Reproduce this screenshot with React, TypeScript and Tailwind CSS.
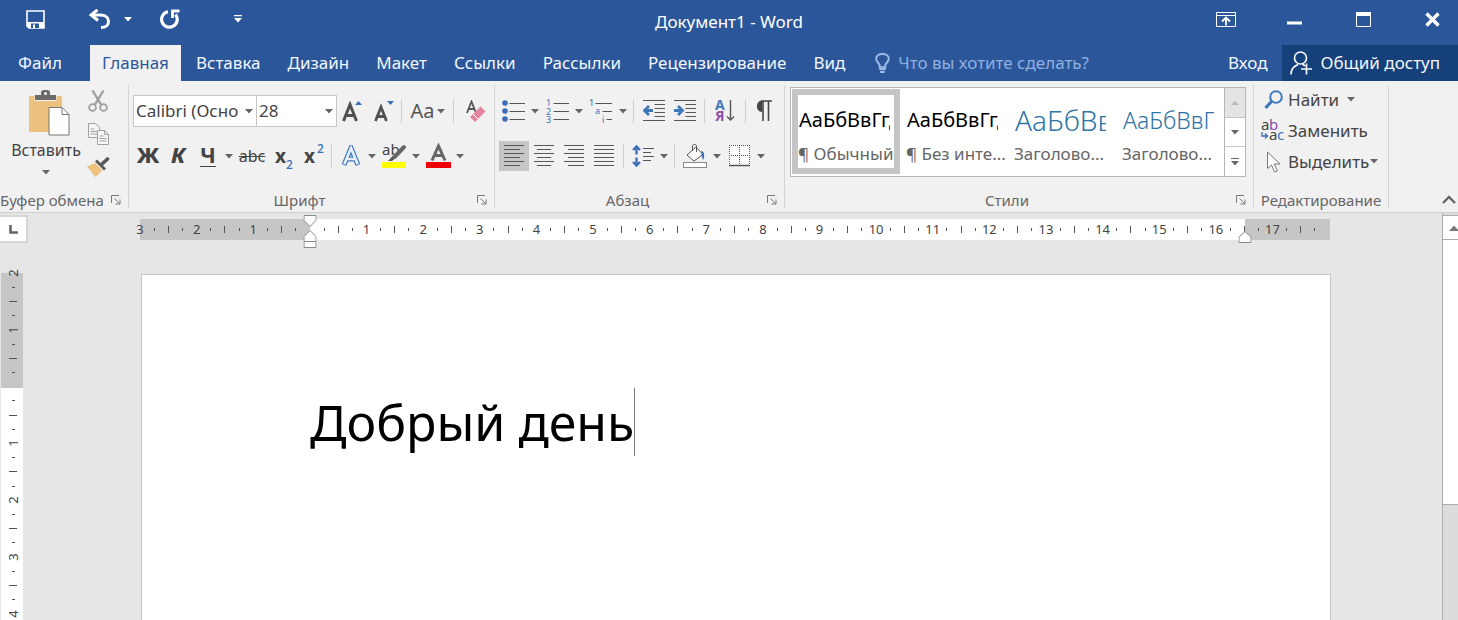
import { useState } from "react";
import type { ReactNode } from "react";
import clsx from "clsx";

const TABS = ["Вставка", "Дизайн", "Макет", "Ссылки", "Рассылки", "Рецензирование", "Вид"];

const STYLES = [
  { name: "¶ Обычный", sample: "АаБбВвГгДд", className: "text-[20px] text-black" },
  { name: "¶ Без инте...", sample: "АаБбВвГгДд", className: "text-[20px] text-black" },
  { name: "Заголово...", sample: "АаБбВвГг", className: "text-[28px] font-light text-[#2e74a5]" },
  { name: "Заголово...", sample: "АаБбВвГ", className: "text-[23px] font-light text-[#2e74a5]" },
];

// Left margin is 3 cm, text area 16.5 cm, right margin 1.5 cm; four marks per cm
const H_MARKS = Array.from({ length: 85 }, (_, i) => i - 12);
const V_MARKS = Array.from({ length: 25 }, (_, i) => i - 8);

function Caret({ className = "text-[#666]" }: { className?: string }) {
  return (
    <svg width="8" height="5" viewBox="0 0 8 5" className={clsx("shrink-0", className)} aria-hidden="true">
      <path d="M0 0h8L4 4.6z" fill="currentColor" />
    </svg>
  );
}

function IconButton({ label, className = "w-8", children }: { label: string; className?: string; children: ReactNode }) {
  return (
    <button type="button" aria-label={label} className={clsx("flex h-[30px] shrink-0 items-center justify-center", className)}>
      {children}
    </button>
  );
}

function CaretButton({ label }: { label: string }) {
  return (
    <button type="button" aria-label={label} className="flex h-[30px] w-3 shrink-0 items-center justify-center">
      <Caret />
    </button>
  );
}

function Divider() {
  return <span className="mx-1 h-6 w-px shrink-0 bg-[#cfcfcf]" />;
}

function Group({ label, launcher = true, className, children }: { label: string; launcher?: boolean; className?: string; children: ReactNode }) {
  return (
    <section aria-label={label} className={clsx("flex shrink-0 flex-col", className)}>
      <div className="my-1 flex flex-1 flex-col border-r border-[#d4d4d4]">
        <div className="flex-1">{children}</div>
        <div className="flex h-4 items-center text-[15px] leading-4 text-[#666]">
          <span className="flex-1 text-center whitespace-nowrap">{label}</span>
          {launcher && (
            <button type="button" aria-label={`${label}: параметры`} className="flex w-6 items-center justify-center">
              <svg width="10" height="10" viewBox="0 0 10 10" fill="none" stroke="#777" aria-hidden="true">
                <path d="M.5 8V.5H8M3.5 3.5l5 5M9 4.5V9H4.5" />
              </svg>
            </button>
          )}
        </div>
      </div>
    </section>
  );
}

function Lines({ rows }: { rows: [number, number][] }) {
  return (
    <svg width="20" height="22" viewBox="0 0 20 22" stroke="#555" aria-hidden="true">
      {rows.map(([x1, x2], i) => (
        <path key={i} d={`M${x1} ${i * 4 + 0.5}H${x2}`} />
      ))}
    </svg>
  );
}

function TitleBar() {
  return (
    <div className="grid h-[45px] grid-cols-[1fr_auto_1fr] items-center text-white">
      <div className="flex items-center pb-[7px] pl-[26px]">
        <button type="button" aria-label="Сохранить">
          <svg width="19" height="19" viewBox="0 0 19 19" fill="none" aria-hidden="true">
            <path d="M1 1h17v17H3l-2-2z" stroke="currentColor" strokeWidth="1.6" />
            <path d="M1 12h17v6H3l-2-2z" fill="currentColor" />
            <path d="M5 13.500h8V18H5z" fill="#2b579a" />
            <path d="M7 14.500h2V18H7z" fill="currentColor" />
          </svg>
        </button>
        <button type="button" aria-label="Отменить" className="ml-11">
          <svg width="21" height="20" viewBox="0 0 21 20" fill="none" stroke="currentColor" aria-hidden="true">
            <path d="M2 6h9.500c5 0 8 2.800 8 6.500s-3 6-7.500 6" strokeWidth="3" />
            <path d="M8.500 .8L2.200 6L9 11.500" strokeWidth="3" />
          </svg>
        </button>
        <button type="button" aria-label="Список отмены" className="ml-[14px]">
          <Caret className="text-white" />
        </button>
        <button type="button" aria-label="Повторить" className="ml-7">
          <svg width="20" height="20" viewBox="0 0 20 20" fill="none" stroke="currentColor" aria-hidden="true">
            <path d="M8 2.700A7.800 7.800 0 1 0 15.500 5.500" strokeWidth="3.200" />
            <path d="M12.500 9V2H19.500" strokeWidth="2.800" />
          </svg>
        </button>
        <button type="button" aria-label="Настройка панели" className="ml-[54px]">
          <svg width="8" height="8" viewBox="0 0 8 8" fill="currentColor" aria-hidden="true">
            <path d="M0 0h8v1.200H0zM0 3h8L4 7.500z" />
          </svg>
        </button>
      </div>
      <h1 className="pb-0.5 text-[17px] leading-6">Документ1 - Word</h1>
      <div className="flex items-center justify-end pr-[18px] pb-[7px]">
        <button type="button" aria-label="Параметры ленты">
          <svg width="20" height="15" viewBox="0 0 20 15" fill="none" stroke="currentColor" aria-hidden="true">
            <path d="M.5 .5h19v14H.5zM.5 3.500h19" />
            <path d="M10 13.500V6M6 9.500L10 5.500l4 4" strokeWidth="1.800" />
          </svg>
        </button>
        <button type="button" aria-label="Свернуть" className="ml-[51px]">
          <svg width="15" height="15" viewBox="0 0 15 15" aria-hidden="true">
            <path d="M0 9.500h15v3H0z" fill="currentColor" />
          </svg>
        </button>
        <button type="button" aria-label="Развернуть" className="ml-[54px]">
          <svg width="15" height="15" viewBox="0 0 15 15" fill="none" aria-hidden="true">
            <path d="M.5 .5h14v14H.5z" stroke="currentColor" />
            <path d="M0 0h15v4H0z" fill="currentColor" />
          </svg>
        </button>
        <button type="button" aria-label="Закрыть" className="ml-[54px]">
          <svg width="15" height="15" viewBox="0 0 15 15" stroke="currentColor" aria-hidden="true">
            <path d="M1.500 1.500l12 12M13.500 1.500l-12 12" strokeWidth="3.400" />
          </svg>
        </button>
      </div>
    </div>
  );
}

function TabBar() {
  return (
    <nav className="flex h-9 text-[17px] leading-9 whitespace-nowrap text-[#f3f6fb]">
      <button type="button" className="w-[90px] pr-2.5 text-center">Файл</button>
      <button type="button" className="w-[91px] bg-[#f1f1f2] text-center text-[#2b579a]">Главная</button>
      <div className="flex pl-px">
        {TABS.map((tab) => (
          <button key={tab} type="button" className="pr-[13px] pl-[14px]">
            {tab}
          </button>
        ))}
      </div>
      <label className="ml-[17px] flex flex-1 items-center">
        <svg width="16" height="22" viewBox="0 0 16 22" fill="none" stroke="#9db8e2" strokeWidth="2.2" aria-hidden="true">
          <path d="M5 15.500v-2C5 11.500 1.200 10 1.200 6.500C1.200 3.500 4 1.200 8 1.200s6.800 2.300 6.800 5.300C14.800 10 11 11.500 11 13.500v2z" />
          <path d="M4.500 17.500h7M5.500 20.500h5" />
        </svg>
        <input
          type="text"
          aria-label="Что вы хотите сделать?"
          placeholder="Что вы хотите сделать?"
          className="ml-2 w-full min-w-0 bg-transparent placeholder:text-[#8fb0e0] focus:outline-none"
        />
      </label>
      <button type="button" className="px-[15px]">Вход</button>
      <button type="button" className="flex items-center bg-[#15407a] pr-[18px] pl-2">
        <svg width="22" height="24" viewBox="0 0 22 24" fill="none" stroke="currentColor" strokeWidth="1.700" className="mr-2" aria-hidden="true">
          <circle cx="10.500" cy="7" r="6" />
          <path d="M1 23.500C1 17.500 4 15.500 8 13.500M12.500 13l2.500 2M16.500 12.500v11M11 18h11" />
        </svg>
        Общий доступ
      </button>
    </nav>
  );
}

function ClipboardGroup() {
  return (
    <Group label="Буфер обмена" className="w-[129px]">
      <div className="flex pt-[5px]">
        <button type="button" className="flex w-[84px] flex-col items-center pl-2 text-[16px] leading-6 text-[#444]">
          <svg width="42" height="46" viewBox="0 0 42 46" className="ml-1.5" aria-hidden="true">
            <path d="M1 6h33v36H1z" fill="#ecc27e" />
            <path d="M6.500 11V5h22v6z" fill="#f1f1f2" />
            <path d="M7 10V5h6V2.500C13 1 14 0 15.500 0h4C21 0 22 1 22 2.500V5h6v5z" fill="#6b6b6b" />
            <circle cx="17.500" cy="3.500" r="1.500" fill="#f1f1f2" />
            <path d="M21 17.500h13l7 7V45H21z" fill="#fff" stroke="#777" />
            <path d="M34 17.500v7h7" fill="none" stroke="#777" />
          </svg>
          <span className="mt-0.5">Вставить</span>
          <Caret className="mt-2 text-[#666]" />
        </button>
        <div className="flex w-7 flex-col items-center">
          <button type="button" aria-label="Вырезать">
            <svg width="20" height="22" viewBox="0 0 20 22" fill="none" stroke="#a0a0a0" strokeWidth="1.800" aria-hidden="true">
              <circle cx="4.500" cy="17.500" r="3.400" />
              <circle cx="15.500" cy="17.500" r="3.400" />
              <path d="M4.500 0.500L13 14.500M15.500 .5L7 14.500" strokeWidth="2.400" />
            </svg>
          </button>
          <button type="button" aria-label="Копировать" className="mt-[11px]">
            <svg width="21" height="22" viewBox="0 0 21 22" fill="#f6f6f6" stroke="#a0a0a0" aria-hidden="true">
              <path d="M.5 .5h7l4 4v10h-11z" />
              <path d="M2.500 6h4M2.500 8.500h7M2.500 11h7" />
              <path d="M9.500 7.500h7l4 4v10h-11z" />
              <path d="M16.500 7.500v4h4M11.500 13h4M11.500 15.500h7M11.500 18h7" fill="none" />
            </svg>
          </button>
          <button type="button" aria-label="Формат по образцу" className="mt-3">
            <svg width="23" height="20" viewBox="0 0 23 20" aria-hidden="true">
              <path d="M0 9.500L8 6l7.500 7.500L8.500 20z" fill="#ecc27e" />
              <path d="M8 4.500L10 2.500l9 9-2 2z" fill="#595959" />
              <path d="M14.500 7.500L20.500 2" stroke="#595959" strokeWidth="3.600" strokeLinecap="round" />
            </svg>
          </button>
        </div>
      </div>
    </Group>
  );
}

function FontGroup() {
  return (
    <Group label="Шрифт" className="w-[366px]">
      <div className="flex items-center pt-2.5 pl-1">
        <div className="relative">
          <select aria-label="Шрифт" className="h-8 w-[124px] appearance-none border border-[#c6c6c6] bg-white pl-0.5 text-[17px] text-[#444]">
            <option>Calibri (Осно</option>
          </select>
          <span className="pointer-events-none absolute inset-y-0 right-1 flex items-center">
            <Caret />
          </span>
        </div>
        <div className="relative -ml-px">
          <select aria-label="Размер шрифта" className="h-8 w-[81px] appearance-none border border-[#c6c6c6] bg-white pl-0.5 text-[17px] text-[#444]">
            <option>28</option>
          </select>
          <span className="pointer-events-none absolute inset-y-0 right-1 flex items-center">
            <Caret />
          </span>
        </div>
        <IconButton label="Увеличить размер" className="w-[29px]">
          <svg width="20" height="22" viewBox="0 0 20 22" aria-hidden="true">
            <path d="M1.500 21L8 4.500L14.500 21M4 15.500h8" fill="none" stroke="#505050" strokeWidth="3" />
            <path d="M13 5h7l-3.500-4z" fill="#3c6eb4" />
          </svg>
        </IconButton>
        <IconButton label="Уменьшить размер" className="w-[35px]">
          <svg width="20" height="22" viewBox="0 0 20 22" aria-hidden="true">
            <path d="M1.500 21L7 7L12.500 21M3.500 16.500h7" fill="none" stroke="#505050" strokeWidth="2.800" />
            <path d="M13 1h7l-3.500 4z" fill="#3c6eb4" />
          </svg>
        </IconButton>
        <span className="h-6 w-px bg-[#cfcfcf]" />
        <button type="button" aria-label="Регистр" className="flex w-[52px] items-center justify-center gap-0.5 text-[20px] leading-7 text-[#555]">
          Aa
          <Caret />
        </button>
        <span className="h-6 w-px bg-[#cfcfcf]" />
        <IconButton label="Очистить формат" className="ml-1 w-9">
          <svg width="20" height="22" viewBox="0 0 20 22" aria-hidden="true">
            <path d="M1 13L5.500 1.500L10 13M2.500 9h6" fill="none" stroke="#555" strokeWidth="1.800" />
            <path d="M4 17L14.500 6.500l5 5L9 22z" fill="#e5839a" />
            <path d="M7 14l5 5" stroke="#fff" />
          </svg>
        </IconButton>
      </div>
      <div className="mt-3.5 flex items-center pl-1 text-[#444]">
        <IconButton label="Полужирный" className="w-[30px] pb-[3px] text-[22px] font-extrabold">Ж</IconButton>
        <IconButton label="Курсив" className="w-[30px] pb-[3px] text-[22px] font-extrabold italic">К</IconButton>
        <IconButton label="Подчёркнутый" className="w-[30px] pb-[3px] text-[22px] font-bold underline decoration-1 underline-offset-3">Ч</IconButton>
        <CaretButton label="Тип подчёркивания" />
        <IconButton label="Зачёркнутый" className="w-[34px] text-[16px] line-through">abc</IconButton>
        <IconButton label="Подстрочный" className="w-[30px] text-[19px] font-bold">
          x<span className="self-end text-[12px] leading-3 font-medium text-[#3c6eb4]">2</span>
        </IconButton>
        <IconButton label="Надстрочный" className="w-[30px] text-[19px] font-bold">
          x<span className="ml-0.5 self-start text-[12px] leading-4 font-medium text-[#3c6eb4]">2</span>
        </IconButton>
        <span className="ml-0.5 h-6 w-px bg-[#cfcfcf]" />
        <IconButton label="Текстовые эффекты" className="ml-1 w-[30px]">
          <svg width="20" height="22" viewBox="0 0 20 22" fill="none" aria-hidden="true">
            <path d="M3 20L10 3L17 20M5.500 14h9" stroke="#3f78ba" strokeWidth="5" />
            <path d="M3.300 19.300L10 3L16.700 19.300M5.500 14h9" stroke="#e8f2fc" strokeWidth="2.600" />
          </svg>
        </IconButton>
        <CaretButton label="Выбрать эффект" />
        <IconButton label="Цвет выделения">
          <svg width="25" height="26" viewBox="0 0 25 26" className="overflow-visible" aria-hidden="true">
            <text x="0" y="12" fontSize="15" fill="#444" fontFamily="Noto Sans, sans-serif">ab</text>
            <path d="M6 18l5-5.500 2.500 2.500L10 18z" fill="#555" />
            <path d="M12.500 14L22 4" stroke="#666" strokeWidth="4" strokeLinecap="round" />
            <rect y="19" width="24" height="6" fill="#ff0" />
          </svg>
        </IconButton>
        <CaretButton label="Выбрать цвет выделения" />
        <IconButton label="Цвет текста">
          <svg width="25" height="26" viewBox="0 0 25 26" aria-hidden="true">
            <path d="M6 17.500L12.500 3L19 17.500M8.500 12.500h8" fill="none" stroke="#666" strokeWidth="3" />
            <rect y="19" width="25" height="6" fill="#ee0008" />
          </svg>
        </IconButton>
        <CaretButton label="Выбрать цвет текста" />
      </div>
    </Group>
  );
}

function ListIcon({ kind }: { kind: "bullets" | "numbers" | "levels" }) {
  return (
    <svg width="24" height="24" viewBox="0 0 24 24" fontSize="9" fill="#3c6eb4" fontFamily="Noto Sans, sans-serif" className="overflow-visible" aria-hidden="true">
      {kind === "bullets" && (
        <>
          <circle cx="3" cy="4" r="2.800" />
          <circle cx="3" cy="12" r="2.800" />
          <circle cx="3" cy="20" r="2.800" />
          <path d="M7.500 4.500H23M7.500 12.500H23M7.500 20.500H23" stroke="#555" />
        </>
      )}
      {kind === "numbers" && (
        <>
          <text x="1" y="7">1</text>
          <text x="1" y="15.500">2</text>
          <text x="1" y="24">3</text>
          <path d="M8.500 4.500H24M8.500 12.500H24M8.500 20.500H24" stroke="#555" />
        </>
      )}
      {kind === "levels" && (
        <>
          <text x="0" y="7">1</text>
          <text x="6" y="14.500">a</text>
          <text x="13" y="23.500">i</text>
          <path d="M6.500 4.500H23M13.500 12.500H23M17.500 20.500H23" stroke="#555" />
        </>
      )}
    </svg>
  );
}

function IndentIcon({ arrow }: { arrow: string }) {
  return (
    <svg width="22" height="22" viewBox="0 0 22 22" fill="none" aria-hidden="true">
      <path d="M0 .5h22M11.500 4.500H22M11.500 8.500H22M11.500 12.500H22M11.500 16.500H22M0 20.500h22" stroke="#555" />
      <path d={arrow} stroke="#3f78ba" strokeWidth="2.800" />
    </svg>
  );
}

function ParagraphGroup() {
  return (
    <Group label="Абзац" className="w-[290px]">
      <div className="flex h-[42px] items-center pt-2.5 pl-1">
        <IconButton label="Маркеры" className="w-[30px]"><ListIcon kind="bullets" /></IconButton>
        <CaretButton label="Вид маркеров" />
        <IconButton label="Нумерация"><ListIcon kind="numbers" /></IconButton>
        <CaretButton label="Вид нумерации" />
        <IconButton label="Многоуровневый список"><ListIcon kind="levels" /></IconButton>
        <CaretButton label="Вид списка" />
        <Divider />
        <IconButton label="Уменьшить отступ"><IndentIcon arrow="M10 10.500H2M6 6l-4.500 4.500L6 15" /></IconButton>
        <IconButton label="Увеличить отступ" className="w-[30px]"><IndentIcon arrow="M0 10.500h8M4 6l4.500 4.500L4 15" /></IconButton>
        <Divider />
        <IconButton label="Сортировка">
          <svg width="20" height="24" viewBox="0 0 20 24" fontSize="14" fontWeight="700" fontFamily="Noto Sans, sans-serif" className="overflow-visible" aria-hidden="true">
            <text x="0" y="11" fill="#3f78ba">А</text>
            <text x="0" y="22" fill="#8a4fa8">Я</text>
            <path d="M15.500 1v20M12 17.500l3.500 3.500 3.500-3.500" fill="none" stroke="#555" strokeWidth="1.400" />
          </svg>
        </IconButton>
        <Divider />
        <IconButton label="Знаки абзаца" className="w-7">
          <svg width="18" height="22" viewBox="0 0 18 22" aria-hidden="true">
            <path d="M7 .5a5.800 5.800 0 0 0 0 11.500z" fill="#444" />
            <path d="M6 1h11M8 1v20M13.500 1v20" stroke="#444" strokeWidth="1.600" />
          </svg>
        </IconButton>
      </div>
      <div className="mt-3.5 flex items-center pl-1">
        <IconButton label="По левому краю" className="w-[30px] bg-[#c6c6c6]"><Lines rows={[[0, 20], [0, 16], [0, 20], [0, 16], [0, 20], [0, 16]]} /></IconButton>
        <IconButton label="По центру" className="w-[30px]"><Lines rows={[[0, 20], [3, 17], [0, 20], [3, 17], [0, 20], [3, 17]]} /></IconButton>
        <IconButton label="По правому краю" className="w-[30px]"><Lines rows={[[0, 20], [4, 20], [0, 20], [4, 20], [0, 20], [4, 20]]} /></IconButton>
        <IconButton label="По ширине" className="w-[30px]"><Lines rows={[[0, 20], [0, 20], [0, 20], [0, 20], [0, 20], [0, 20]]} /></IconButton>
        <Divider />
        <IconButton label="Интервал" className="w-[30px]">
          <svg width="22" height="24" viewBox="0 0 22 24" fill="none" aria-hidden="true">
            <path d="M4.500 10.500V2M1 6l3.500-3.500L8 6M4.500 13.500V22M1 18l3.500 3.500L8 18" stroke="#3f6eb8" strokeWidth="2.400" />
            <path d="M11 4.500h11M11 8.500h8M11 12.500h11M11 16.500h8" stroke="#555" />
          </svg>
        </IconButton>
        <CaretButton label="Выбрать интервал" />
        <Divider />
        <IconButton label="Заливка">
          <svg width="24" height="24" viewBox="0 0 24 24" fill="none" aria-hidden="true">
            <path d="M4 11L13 3l7 7.500-9 6.500z" fill="#fff" stroke="#555" />
            <path d="M9.500 7V2c0-2 4-2 4 0v6" stroke="#555" />
            <path d="M18.500 6.500c3 2 3.500 6 1.500 9.500l-1.500-5z" fill="#3c6eb4" />
            <rect x=".5" y="18.500" width="23" height="5" fill="#fff" stroke="#888" />
          </svg>
        </IconButton>
        <CaretButton label="Выбрать заливку" />
        <IconButton label="Границы">
          <svg width="21" height="22" viewBox="0 0 21 22" fill="none" aria-hidden="true">
            <path d="M0 0h21v21H0z" fill="#fff" />
            <path d="M.5 0v20M20.500 0v20M10.500 0v20M0 .5h21M0 10.500h21" stroke="#555" strokeDasharray="1 1" shapeRendering="crispEdges" />
            <path d="M0 20.500h21" stroke="#555" strokeWidth="1.500" />
          </svg>
        </IconButton>
        <CaretButton label="Выбрать границы" />
      </div>
    </Group>
  );
}

function StylesGroup() {
  const [selected, setSelected] = useState(0);

  return (
    <Group label="Стили">
      <div className="mt-0.5 mr-[7px] ml-[5px] flex border border-[#b5b5b5] bg-white">
        <div className="flex h-[88px] pt-px pl-px">
          {STYLES.map((style, i) => (
            <button
              key={i}
              type="button"
              onClick={() => setSelected(i)}
              className={clsx("h-[85px] w-[108px] border-6 text-left", i === selected ? "border-[#c5c5c5]" : "border-transparent")}
            >
              <span className={clsx("mr-1 ml-px block h-11 overflow-hidden leading-[48px] whitespace-nowrap", style.className)}>{style.sample}</span>
              <span className="block text-[17px] leading-7 whitespace-nowrap text-[#666]">{style.name}</span>
            </button>
          ))}
        </div>
        <div className="flex w-[21px] flex-col border-l border-[#b5b5b5]">
          <button type="button" aria-label="Вверх" className="flex flex-1 items-center justify-center bg-[#e4e4e4]">
            <Caret className="rotate-180 text-[#bbb]" />
          </button>
          <button type="button" aria-label="Вниз" className="flex flex-1 items-center justify-center border-y border-[#c6c6c6]">
            <Caret />
          </button>
          <button type="button" aria-label="Все стили" className="flex flex-1 items-center justify-center">
            <svg width="8" height="8" viewBox="0 0 8 8" fill="#666" aria-hidden="true">
              <path d="M0 0h8v1H0zM0 3h8L4 7.500z" />
            </svg>
          </button>
        </div>
      </div>
    </Group>
  );
}

function EditingGroup() {
  return (
    <Group label="Редактирование" launcher={false} className="w-[135px]">
      <div className="-mt-px flex flex-col pl-[7px] text-[17px] text-[#444]">
        <button type="button" className="flex h-[31px] items-center">
          <span className="flex w-[27px] pl-[3px]">
            <svg width="19" height="20" viewBox="0 0 19 20" fill="none" stroke="#3f78ba" aria-hidden="true">
              <circle cx="12" cy="7" r="5.800" strokeWidth="2" />
              <path d="M7.500 11.500L1.500 18" strokeWidth="3.200" />
            </svg>
          </span>
          Найти
          <Caret className="ml-2 text-[#666]" />
        </button>
        <button type="button" className="flex h-[31px] items-center">
          <span className="flex w-[27px]">
            <svg width="24" height="24" viewBox="0 0 24 24" fontSize="15" fontFamily="Noto Sans, sans-serif" className="overflow-visible" aria-hidden="true">
              <text x="0" y="11" fill="#444">a</text>
              <text x="8" y="11" fill="#8a4fa8">b</text>
              <text x="8" y="21" fill="#444">a</text>
              <text x="16" y="21" fill="#3f78ba">c</text>
              <path d="M1 13v4h5M4 14.500L6.500 17 4 19.500" fill="none" stroke="#3c6eb4" strokeWidth="1.300" />
            </svg>
          </span>
          Заменить
        </button>
        <button type="button" className="flex h-[31px] items-center">
          <span className="flex w-[27px] pl-1.5">
            <svg width="14" height="22" viewBox="0 0 14 22" fill="#fff" stroke="#777" aria-hidden="true">
              <path d="M.5 1v16.500l4-3.500 3 7 2.800-1.200-3-6.800H13z" />
            </svg>
          </span>
          Выделить
          <Caret className="ml-px text-[#666]" />
        </button>
      </div>
    </Group>
  );
}

function HorizontalRuler() {
  return (
    <div className="relative mt-1.5 flex h-[21px] items-center justify-between bg-[linear-gradient(to_right,#c6c6c7_14.300%,#fff_14.300%,#fff_92.850%,#c6c6c7_92.850%)] text-[13px] leading-[21px] text-[#444]">
      {H_MARKS.map((mark) => (
        <span key={mark} className="flex w-0 justify-center">
          {mark === 72 || mark === 0 ? null : mark % 4 === 0 ? (
            Math.abs(mark / 4)
          ) : (
            <i className={clsx("w-px shrink-0 bg-[#555]", mark % 2 === 0 ? "h-[7px]" : "h-[3px]")} />
          )}
        </span>
      ))}
      <svg width="13" height="34" viewBox="0 0 13 34" fill="#fff" stroke="#888" className="absolute -top-1 left-[14.300%] -translate-x-1/2" aria-label="Отступ слева">
        <path d="M.5 .5h12v5l-6 6-6-6zM6.500 15.500l6 6v5H.5v-5zM.5 26.500h12v6H.5z" />
      </svg>
      <svg width="13" height="12" viewBox="0 0 13 12" fill="#fff" stroke="#888" className="absolute top-3 left-[92.850%] -translate-x-1/2" aria-label="Отступ справа">
        <path d="M6.500 .5l6 5.500v5.500H.5V6z" />
      </svg>
    </div>
  );
}

function VerticalRuler() {
  return (
    <div className="mt-[30px] ml-px w-[22px] flex-1 bg-white text-[13px] leading-4 text-[#444]">
      <div className="flex h-[341px] flex-col items-center justify-between bg-[linear-gradient(to_bottom,#c6c6c7_115px,#fff_115px)] pl-0.5">
        {V_MARKS.map((mark) => (
          <span key={mark} className="flex h-0 items-center">
            {mark === 0 ? null : mark % 4 === 0 ? (
              <b className="-rotate-90 font-normal">{Math.abs(mark / 4)}</b>
            ) : (
              <i className={clsx("h-px shrink-0 bg-[#555]", mark % 2 === 0 ? "w-2" : "w-[3px]")} />
            )}
          </span>
        ))}
      </div>
    </div>
  );
}

export default function App() {
  return (
    <div className="flex min-h-screen flex-col overflow-hidden bg-[#e6e6e7] font-['Noto_Sans','Open_Sans',sans-serif]">
      <header className="bg-[#2b579a]">
        <TitleBar />
        <TabBar />
      </header>

      {/* Ribbon */}
      <div className="flex h-[132px] border-b border-[#d0d0d0] bg-[#f1f1f2]">
        <ClipboardGroup />
        <FontGroup />
        <ParagraphGroup />
        <StylesGroup />
        <EditingGroup />
        <button type="button" aria-label="Свернуть ленту" className="ml-auto self-end pr-0.5 pb-2">
          <svg width="14" height="9" viewBox="0 0 14 9" fill="none" stroke="#666" strokeWidth="2.400" aria-hidden="true">
            <path d="M1 8l6-6 6 6" />
          </svg>
        </button>
      </div>

      {/* Workspace */}
      <main className="flex flex-1">
        <div className="flex w-7 flex-col">
          <button type="button" aria-label="Тип табуляции" className="mt-0.5 flex h-7 items-center border-2 border-l-0 border-[#d6d6d6] bg-white pl-[9px]">
            <svg width="9" height="9" viewBox="0 0 9 9" fill="none" stroke="#666" strokeWidth="2.600" aria-hidden="true">
              <path d="M1.500 0v7.500H9" />
            </svg>
          </button>
          <VerticalRuler />
        </div>

        <div className="mx-[112px] flex flex-1 flex-col">
          <HorizontalRuler />
          <article className="mt-[34px] -mr-px ml-px flex-1 border border-b-0 border-[#c6c6c6] bg-white pt-[113px] pl-[168px]">
            <p className="inline-block border-r border-[#777] text-[50px] leading-[68px] text-black">Добрый день</p>
          </article>
        </div>

        <div className="flex w-4 flex-col border-l border-[#ababab] bg-[#dcdcdd]">
          <button type="button" aria-label="Прокрутить вверх" className="mt-0.5 flex h-[25px] items-center justify-end border-y border-[#ababab] bg-white">
            <svg width="9" height="6" viewBox="0 0 9 6" aria-hidden="true">
              <path d="M0 6l5-5.500L9 5v1z" fill="#777" />
            </svg>
          </button>
          <div className="h-[265px] border-b border-[#ababab] bg-white" />
        </div>
      </main>
    </div>
  );
}
